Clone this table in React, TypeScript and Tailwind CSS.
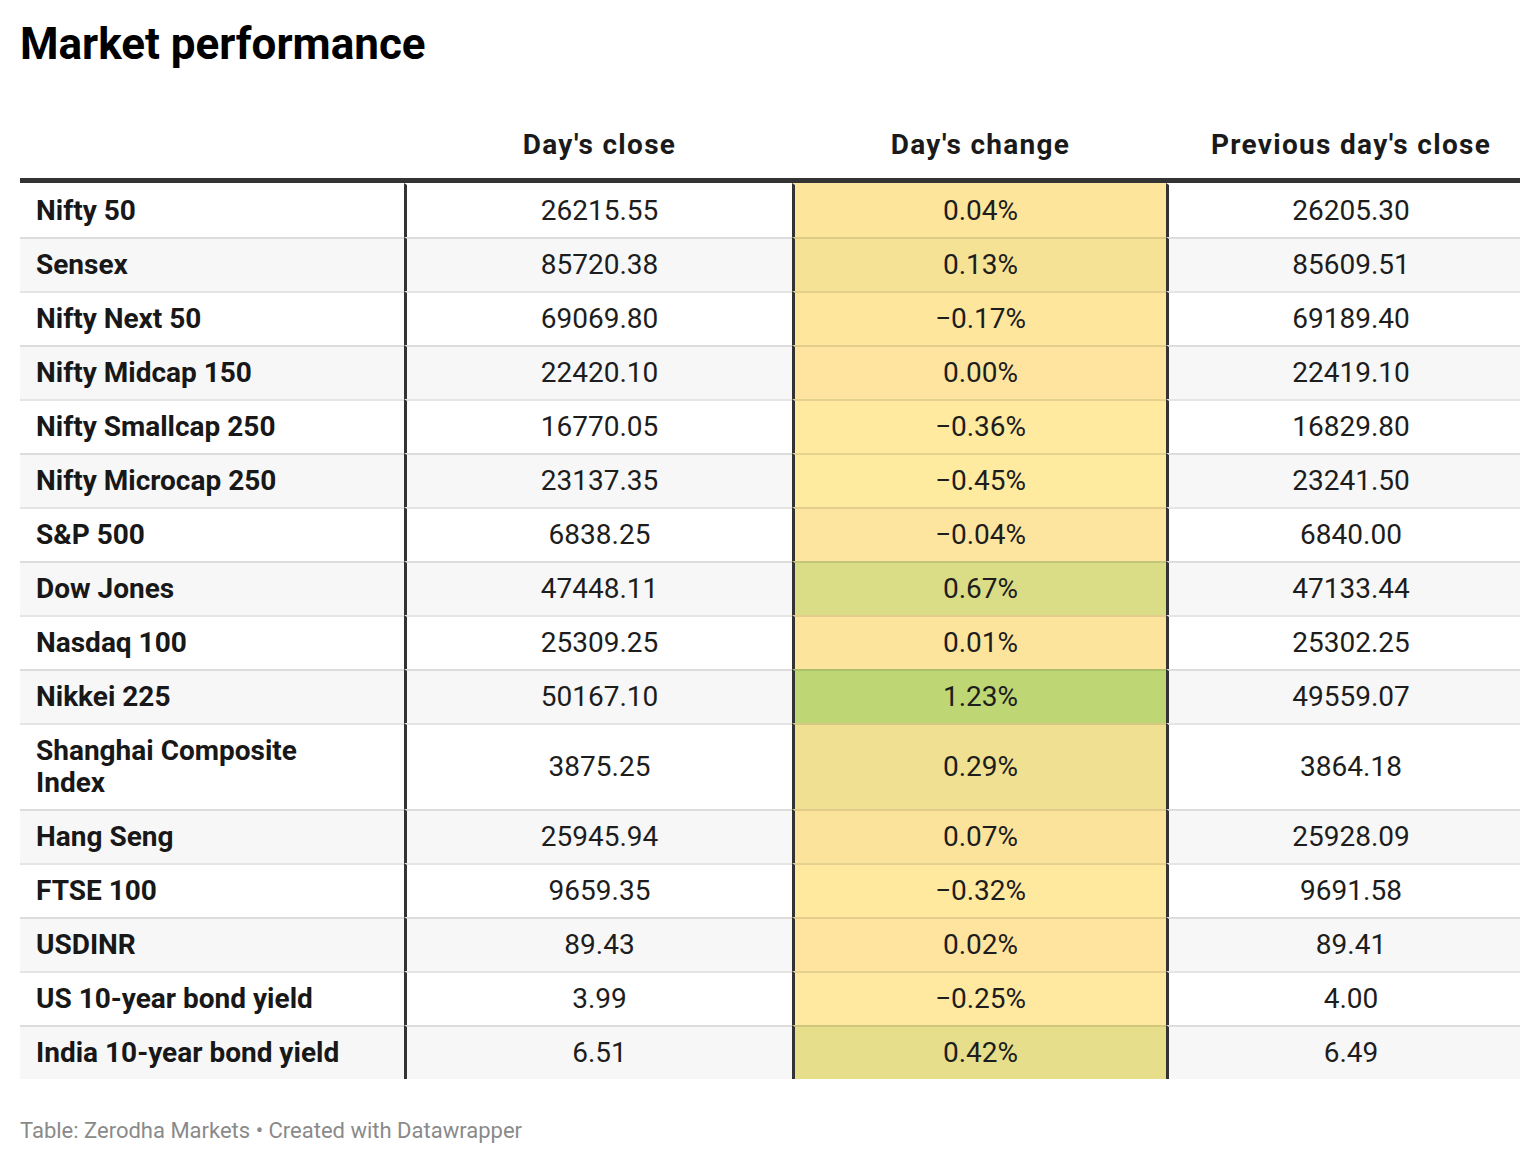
import React from 'react';

interface Row {
  name: React.ReactNode;
  close: string;
  change: string;
  prev: string;
  color: string;
}

const rows: Row[] = [
  { name: 'Nifty 50', close: '26215.55', change: '0.04%', prev: '26205.30', color: '#fde59b' },
  { name: 'Sensex', close: '85720.38', change: '0.13%', prev: '85609.51', color: '#f5e294' },
  { name: 'Nifty Next 50', close: '69069.80', change: '-0.17%', prev: '69189.40', color: '#fee69d' },
  { name: 'Nifty Midcap 150', close: '22420.10', change: '0.00%', prev: '22419.10', color: '#fee49e' },
  { name: 'Nifty Smallcap 250', close: '16770.05', change: '-0.36%', prev: '16829.80', color: '#ffea9f' },
  { name: 'Nifty Microcap 250', close: '23137.35', change: '-0.45%', prev: '23241.50', color: '#ffeb9f' },
  { name: 'S&P 500', close: '6838.25', change: '-0.04%', prev: '6840.00', color: '#fee59f' },
  { name: 'Dow Jones', close: '47448.11', change: '0.67%', prev: '47133.44', color: '#dadc86' },
  { name: 'Nasdaq 100', close: '25309.25', change: '0.01%', prev: '25302.25', color: '#fde49d' },
  { name: 'Nikkei 225', close: '50167.10', change: '1.23%', prev: '49559.07', color: '#bfd675' },
  {
    name: (
      <>
        Shanghai Composite
        <br />
        Index
      </>
    ),
    close: '3875.25',
    change: '0.29%',
    prev: '3864.18',
    color: '#efe092'
  },
  { name: 'Hang Seng', close: '25945.94', change: '0.07%', prev: '25928.09', color: '#fbe39b' },
  { name: 'FTSE 100', close: '9659.35', change: '-0.32%', prev: '9691.58', color: '#ffe99f' },
  { name: 'USDINR', close: '89.43', change: '0.02%', prev: '89.41', color: '#fee49e' },
  { name: 'US 10-year bond yield', close: '3.99', change: '-0.25%', prev: '4.00', color: '#ffe8a0' },
  { name: 'India 10-year bond yield', close: '6.51', change: '0.42%', prev: '6.49', color: '#e6de8b' }
];

// datawrapper shows a real minus sign
const fmt = (v: string) => v.replace('-', '\u2212');

const App: React.FC = () => {
  return (
    <div className="w-[1540px] min-h-[1164px] bg-white pl-[20px] pr-[20px] pt-[18px] font-['Roboto',sans-serif] text-[#1d1d1d]">
      <h1 className="text-[44px] leading-[52px] font-bold text-black">Market performance</h1>

      <div className="mt-[59px] w-[1500px]">
        {/* Header */}
        <div className="grid grid-cols-[384px_388px_374px_354px] border-b-[5px] border-[#333333] pb-[17px] text-[28px] leading-[32px] font-bold tracking-[1.3px] text-[#1a1a1a]">
          <div />
          <div className="pl-[3px] text-center">Day's close</div>
          <div className="pl-[3px] text-center">Day's change</div>
          <div className="pl-[16px] text-center">Previous day's close</div>
        </div>

        {/* Body */}
        {rows.map((row, i) => {
          const bg = i % 2 === 1 ? 'bg-[#f7f7f7]' : 'bg-white';
          const sep = i === 0 ? 'border-t-2 border-t-transparent' : 'border-t-2 border-t-black/10';
          return (
            <div key={i} className="grid grid-cols-[384px_388px_374px_354px] text-[28px] leading-[32px]">
              <div className={`${bg} ${sep} py-[10px] pl-[16px] font-bold text-[#181818]`}>{row.name}</div>
              <div className={`${bg} ${sep} border-l-[3px] border-l-[#333333] py-[10px] flex items-center justify-center`}>
                {row.close}
              </div>
              <div
                className={`${sep} border-l-[3px] border-l-[#333333] py-[10px] flex items-center justify-center`}
                style={{ backgroundColor: row.color }}
              >
                {fmt(row.change)}
              </div>
              <div className={`${bg} ${sep} border-l-[3px] border-l-[#333333] py-[10px] pl-[13px] flex items-center justify-center`}>
                {row.prev}
              </div>
            </div>
          );
        })}
      </div>

      <p className="mt-[40px] text-[22px] leading-[24px] text-[#8a8a8a]">
        Table: Zerodha Markets • Created with Datawrapper
      </p>
    </div>
  );
};

export default App;
